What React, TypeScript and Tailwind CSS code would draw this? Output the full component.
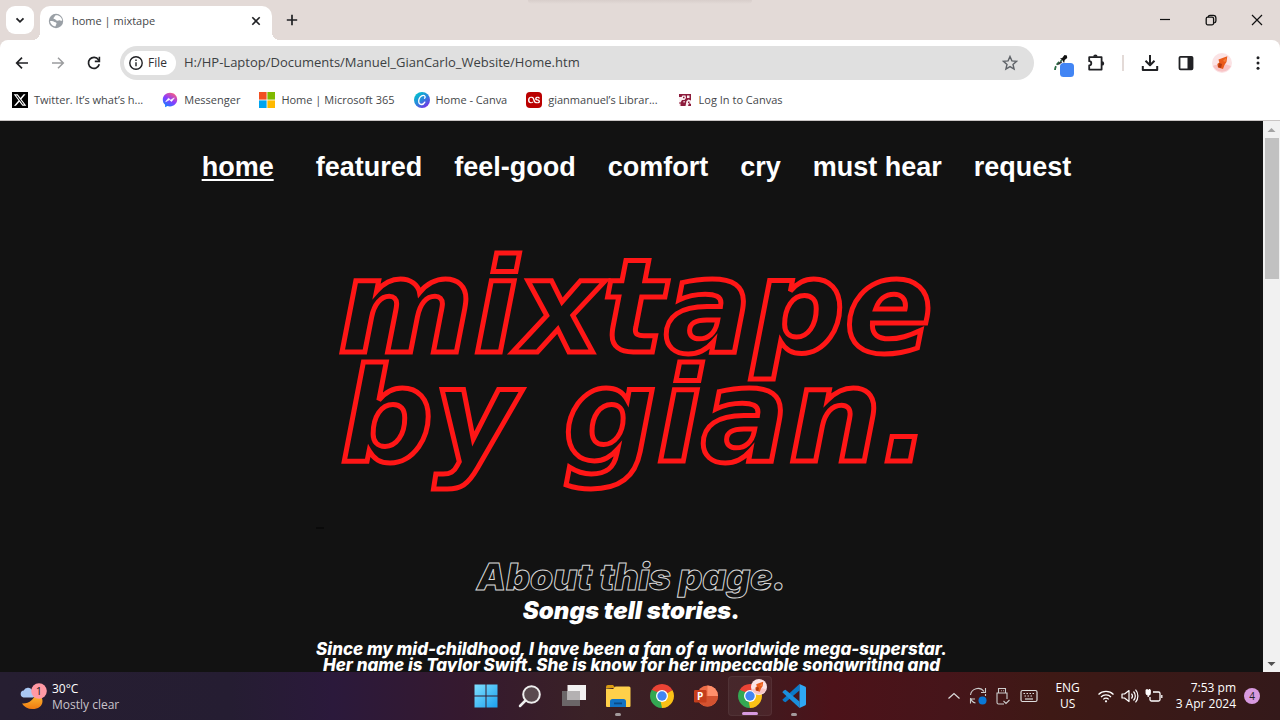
import type { ReactNode } from "react";
import { FaXTwitter, FaLastfm } from "react-icons/fa6";

const bookmarks: { label: string; icon: ReactNode }[] = [
  {
    label: "Twitter. It’s what’s h...",
    icon: (
      <span className="flex size-4 items-center justify-center bg-black text-white">
        <FaXTwitter className="size-3.5" />
      </span>
    ),
  },
  { label: "Messenger", icon: <MessengerIcon /> },
  { label: "Home | Microsoft 365", icon: <MicrosoftIcon /> },
  { label: "Home - Canva", icon: <CanvaIcon /> },
  {
    label: "gianmanuel’s Librar...",
    icon: (
      <span className="flex size-4 items-center justify-center rounded-sm bg-[#ba0000] text-white">
        <FaLastfm className="size-3" />
      </span>
    ),
  },
  { label: "Log In to Canvas", icon: <CanvasIcon /> },
];

const pages = ["featured", "feel-good", "comfort", "cry", "must hear", "request"];

function MessengerIcon() {
  return (
    <svg viewBox="0 0 16 16" className="size-4">
      <defs>
        <linearGradient id="msg" x1="0.2" y1="1" x2="0.8" y2="0">
          <stop offset="0" stopColor="#0a84ff" />
          <stop offset="0.5" stopColor="#8a3cff" />
          <stop offset="1" stopColor="#ff5f7a" />
        </linearGradient>
      </defs>
      <path d="M8 .8C3.900.8.8 3.800.8 7.700c0 2.100.9 3.900 2.300 5.100v2.400l2.300-1.200c.8.2 1.700.4 2.600.4 4.100 0 7.200-2.900 7.200-6.800S12.100.8 8 .8z" fill="url(#msg)" />
      <path d="M3.700 9.700l2.700-3.500 2.200 1.700 3.700-2-2.700 3.600-2.200-1.700z" fill="#fff" stroke="#fff" strokeWidth=".6" strokeLinejoin="round" />
    </svg>
  );
}

function MicrosoftIcon() {
  return (
    <svg viewBox="0 0 16 16" className="size-4">
      <path d="M0 0h7.600v7.600H0z" fill="#f25022" />
      <path d="M8.400 0H16v7.600H8.400z" fill="#7fba00" />
      <path d="M0 8.400h7.600V16H0z" fill="#00a4ef" />
      <path d="M8.400 8.400H16V16H8.400z" fill="#ffb900" />
    </svg>
  );
}

function CanvaIcon() {
  return (
    <svg viewBox="0 0 16 16" className="size-4">
      <defs>
        <linearGradient id="canva" x1="0.1" y1="0.1" x2="0.8" y2="1">
          <stop offset="0" stopColor="#00c4cc" />
          <stop offset="0.5" stopColor="#2b83dc" />
          <stop offset="1" stopColor="#7d2ae8" />
        </linearGradient>
      </defs>
      <circle cx="8" cy="8" r="8" fill="url(#canva)" />
      <path d="M10.500 6.200c1-.6.900-2.900-1.100-2.900-2.500 0-4.700 3-4.700 5.800 0 2.100 1 3.400 2.700 3.400 1.500 0 2.700-1 3.400-2.400" fill="none" stroke="#fff" strokeWidth="1.300" strokeLinecap="round" />
    </svg>
  );
}

function CanvasIcon() {
  return (
    <svg viewBox="0 0 16 16" className="size-4">
      <path d="M2 2h12v12H2z" fill="#8c1c3c" />
      <path d="M2 5h2.500l1-1.500h3L9 6 7.500 8H5l-1.500 2.500H2zM10 3.500h2.500V6H10zM9.500 9l2-1.500L14 8.500V12l-2-1-1 3H8.500z" fill="#fbeff2" />
      <path d="M6 4.800h1.500v1.500H6zM4.500 11h2v1.500h-2zM11 9.500h1.500V11H11z" fill="#8c1c3c" />
      <path d="M2 11.500h1.500V14H2zM6.500 9h1.200v1.500H6.500z" fill="#fbeff2" />
    </svg>
  );
}

function GlobeIcon() {
  return (
    <svg viewBox="0 0 16 16" className="size-4 shrink-0">
      <circle cx="8" cy="8" r="7.200" fill="#9aa0a6" />
      <path d="M7.800 2.200c-1.300.5-.9 1.700-1.900 2.200-.8.4-.4 1.500.5 1.500 1.500 0 1.100 1.400 2.300 1.700 1.300.3 2.500-.7 3.600-.1.700.4 1.400.4 1.900.2-.1-2.900-2.700-5.800-6.400-5.500zM2 7.900c.6 2.900 1.800 4.300 4.300 5.400.8.300 1.600.1 1.500-.8-.1-.9.900-1.200.7-2.200-.3-1.400-2-.9-2.800-1.700C4.900 7.800 3.300 8.100 2 7.900z" fill="#fff" />
    </svg>
  );
}

function ChromeIcon({ className }: { className: string }) {
  return (
    <svg viewBox="0 0 24 24" className={className}>
      <path d="M12 12 1.610 6A12 12 0 0 1 22.390 6z" fill="#ea4335" />
      <path d="M12 12 22.390 6A12 12 0 0 1 12 24z" fill="#fbc116" />
      <path d="M12 12v12A12 12 0 0 1 1.610 6z" fill="#34a853" />
      <path d="M12 6h10.390L12 12z" fill="#ea4335" />
      <path d="M17.200 15 12 24 10 14z" fill="#fbc116" />
      <path d="M6.800 15 1.610 6 10 9z" fill="#34a853" />
      <circle cx="12" cy="12" r="6" fill="#fff" />
      <circle cx="12" cy="12" r="4.700" fill="#4285f4" />
    </svg>
  );
}

function Avatar({ className }: { className: string }) {
  return (
    <svg viewBox="0 0 20 20" className={className}>
      <circle cx="10" cy="10" r="10" fill="#fbe3e5" />
      <path d="M1 13c3-2 5 0 9-1s6 0 9 1a10 10 0 0 1-18 0z" fill="#f8c3c5" />
      <path d="M6.500 6.500 10.500 5l4.800-1.700-.8 5.700-2 3-1.500 4-5-1.500-.7-3.500 2-1.500z" fill="#ea5b1c" />
      <path d="m7 10 3 1-1 4-3-1z" fill="#b23a10" />
      <path d="m11 8 3-3-.5 4z" fill="#f58238" />
    </svg>
  );
}

function IconButton({ label, children }: { label: string; children: ReactNode }) {
  return (
    <button aria-label={label} className="flex h-9 w-9 shrink-0 items-center justify-center">
      {children}
    </button>
  );
}

function TabStrip() {
  return (
    <header className="relative flex h-10 shrink-0 items-end bg-[#e3dad7]">
      <div className="absolute inset-x-0 top-0 mx-auto h-1 w-56 rounded-b bg-linear-to-b from-[#d8cecb] to-[#e3dad7]" />
      <button aria-label="Search tabs" className="mb-1.5 ml-1.5 flex size-7 items-center justify-center rounded-[9px] bg-white">
        <svg viewBox="0 0 16 16" className="size-4">
          <path d="m4.500 6.300 3.500 3.500 3.500-3.500" fill="none" stroke="#202124" strokeWidth="1.800" />
        </svg>
      </button>
      <div className="relative ml-1.5 flex h-[34px] w-[232px] items-center rounded-t-[10px] bg-white pr-2 pb-1 pl-2">
        <span className="absolute bottom-0 -left-2 size-2 bg-[radial-gradient(circle_at_0_0,transparent_8px,white_8px)]" />
        <span className="absolute -right-2 bottom-0 size-2 bg-[radial-gradient(circle_at_100%_0,transparent_8px,white_8px)]" />
        <GlobeIcon />
        <span className="ml-2 flex-1 text-[11px] text-[#45474a]">home | mixtape</span>
        <button aria-label="Close tab" className="flex size-4 items-center justify-center">
          <svg viewBox="0 0 16 16" className="size-4">
            <path d="m4.300 4.300 7.400 7.400m0-7.400-7.400 7.400" stroke="#202124" strokeWidth="1.600" />
          </svg>
        </button>
      </div>
      <button aria-label="New tab" className="mb-1.5 ml-1.5 flex size-7 items-center justify-center">
        <svg viewBox="0 0 16 16" className="size-4">
          <path d="M8 2.800v10.400M2.800 8h10.400" stroke="#202124" strokeWidth="1.700" />
        </svg>
      </button>
      <div className="ml-auto flex h-full">
        <button aria-label="Minimize" className="flex w-[46px] items-center justify-center">
          <svg viewBox="0 0 12 12" className="size-3">
            <path d="M1 5.500h10" stroke="#111" strokeWidth="1.200" />
          </svg>
        </button>
        <button aria-label="Restore" className="flex w-[46px] items-center justify-center">
          <svg viewBox="0 0 12 12" className="size-3" fill="none" stroke="#111" strokeWidth="1.300">
            <rect x="1.200" y="3.200" width="7.400" height="7.600" rx="1.500" />
            <path d="M3.200 3c.2-1 .9-1.600 1.800-1.600h3.200c1.600 0 2.700 1.100 2.700 2.700v3c0 .9-.7 1.700-1.800 1.800" />
          </svg>
        </button>
        <button aria-label="Close" className="flex w-[46px] items-center justify-center">
          <svg viewBox="0 0 12 12" className="size-3">
            <path d="m1 1 10 10M11 1 1 11" stroke="#111" strokeWidth="1.200" />
          </svg>
        </button>
      </div>
    </header>
  );
}

function Toolbar() {
  return (
    <div className="flex h-[46px] items-center px-1">
      <IconButton label="Back">
        <svg viewBox="0 0 16 16" className="size-4">
          <path d="M14 8H3M8 2.700 2.700 8 8 13.300" fill="none" stroke="#202124" strokeWidth="1.700" />
        </svg>
      </IconButton>
      <IconButton label="Forward">
        <svg viewBox="0 0 16 16" className="size-4">
          <path d="M2 8h11M8 2.700 13.300 8 8 13.300" fill="none" stroke="#9b9c9e" strokeWidth="1.500" />
        </svg>
      </IconButton>
      <IconButton label="Reload">
        <svg viewBox="0 0 16 16" className="size-4">
          <path d="M13.300 9.300A5.500 5.500 0 1 1 12.500 4.700L13.300 6" fill="none" stroke="#202124" strokeWidth="1.700" />
          <path d="M12.600 1.800h1.600v5.400H8.800V5.600h3.800z" fill="#202124" />
        </svg>
      </IconButton>
      <div className="mx-2 flex h-[34px] flex-1 items-center rounded-full bg-[#e0e0e0] pr-1.5 pl-1">
        <button className="flex h-6 w-[52px] items-center gap-1 rounded-full bg-white pl-1 text-xs font-medium text-[#303134]">
          <svg viewBox="0 0 16 16" className="size-4" fill="none" stroke="#202124" strokeWidth="1.400">
            <circle cx="8" cy="8" r="6.200" />
            <path d="M8 7.200v4M8 4.600v1.500" />
          </svg>
          File
        </button>
        <input
          aria-label="Address"
          defaultValue="H:/HP-Laptop/Documents/Manuel_GianCarlo_Website/Home.htm"
          className="ml-2 min-w-0 flex-1 bg-transparent text-[13px] text-[#3c4043] outline-none"
        />
        <IconButton label="Bookmark this page">
          <svg viewBox="0 0 16 16" className="size-4">
            <path d="m8 1.500 1.900 4.400 4.700.4-3.600 3.100 1.100 4.700L8 11.600l-4.100 2.500L5 9.400 1.400 6.300l4.700-.4z" fill="none" stroke="#5f6368" strokeWidth="1.400" />
          </svg>
        </IconButton>
      </div>
      <div className="flex items-center">
        <IconButton label="Color picker">
          <svg viewBox="0 0 28 28" className="size-7">
            <path d="M9 21c.3-4.500 2.800-7.500 7-9.800" fill="none" stroke="#2b6b45" strokeWidth="1.800" strokeDasharray="4 1.500" />
            <path d="m11 16 3.500-4 1.800 1.300-3 2.200z" fill="#333" />
            <path d="m14 9.500 2.200-.6L18.500 6l2.400.4.300 2.600-2.500 2-.6 3.200-1.500-2.600z" fill="#111" />
            <rect x="14" y="14" width="14" height="14" rx="3.500" fill="#4285f4" />
          </svg>
        </IconButton>
        <IconButton label="Extensions">
          <svg viewBox="0 0 20 20" className="size-5">
            <path d="M3.200 4.200h12.400v12.400H3.200v-4.100c2.800-.2 2.800-4.100 0-4.300z" fill="none" stroke="#202124" strokeWidth="1.800" strokeLinejoin="round" />
            <path d="M7.200 3.800a2.200 2.200 0 0 1 4.400 0zM16 8.200a2.200 2.200 0 0 1 0 4.400z" fill="#202124" />
          </svg>
        </IconButton>
        <span className="mx-2 h-4 w-0.5 bg-[#e3dad7]" />
        <IconButton label="Downloads">
          <svg viewBox="0 0 20 20" className="size-5">
            <path d="M10 2v10M5.500 7.800l4.500 4.500 4.500-4.500M2.800 13v4h14.400v-4" fill="none" stroke="#202124" strokeWidth="2" strokeLinejoin="round" />
          </svg>
        </IconButton>
        <IconButton label="Side panel">
          <svg viewBox="0 0 16 16" className="size-4">
            <rect x="1.500" y="1.800" width="13" height="12.500" rx="1" fill="none" stroke="#202124" strokeWidth="1.800" />
            <path d="M9.500 2H14v12H9.500z" fill="#202124" />
          </svg>
        </IconButton>
        <IconButton label="Profile">
          <Avatar className="size-5" />
        </IconButton>
        <IconButton label="Menu">
          <svg viewBox="0 0 16 16" className="size-4" fill="#202124">
            <circle cx="8" cy="2.700" r="1.500" />
            <circle cx="8" cy="8" r="1.500" />
            <circle cx="8" cy="13.300" r="1.500" />
          </svg>
        </IconButton>
      </div>
    </div>
  );
}

function BookmarksBar() {
  return (
    <nav aria-label="Bookmarks" className="flex h-[35px] items-center gap-[19px] border-b border-[#c9c5c4] px-3 pb-1.5">
      {bookmarks.map((b) => (
        <a key={b.label} href="#" className="flex items-center gap-1.5 text-[11px] whitespace-nowrap text-[#45474a]">
          {b.icon}
          {b.label}
        </a>
      ))}
    </nav>
  );
}

function Page() {
  return (
    <main className="min-w-0 flex-1 overflow-hidden bg-[#121212] text-white">
      <nav className="flex justify-center gap-8 pt-7 pl-2.5 font-['Liberation_Sans',Arial,sans-serif] text-[27px] leading-9 font-bold whitespace-nowrap">
        <a href="#home" className="mr-2.5 underline decoration-2 underline-offset-3">
          home
        </a>
        {pages.map((p) => (
          <a key={p} href={`#${p}`}>
            {p}
          </a>
        ))}
      </nav>
      <div className="mx-auto max-w-[632px] text-center font-['Inter',sans-serif] font-black whitespace-nowrap italic">
        <h1 className="mt-17 pl-2 font-['DejaVu_Sans',sans-serif] text-[130px] leading-[109px] font-bold text-transparent [-webkit-text-stroke:5px_#ff1616]">
          mixtape
          <br />
          by gian.
        </h1>
        <div className="mt-14 h-0.5 w-2 bg-[#0a0a0a]" />
        <h2 className="mt-7 text-[37px] leading-10 text-transparent [-webkit-text-stroke:1px_#d8d8d8]">About this page.</h2>
        <h3 className="text-2xl leading-7">Songs tell stories.</h3>
        <p className="mt-4 text-[17px] leading-4 font-extrabold">
          Since my mid-childhood, I have been a fan of a worldwide mega-superstar.
          <br />
          Her name is Taylor Swift. She is know for her impeccable songwriting and
        </p>
      </div>
    </main>
  );
}

function Scrollbar() {
  return (
    <div className="flex w-[17px] shrink-0 flex-col items-center bg-[#f1f1f1]">
      <svg viewBox="0 0 17 17" className="size-[17px] shrink-0">
        <path d="M4.500 11 8.500 7l4 4z" fill="#a3a3a3" />
      </svg>
      <div className="h-[141px] w-3.5 bg-[#c1c1c1]" />
      <svg viewBox="0 0 17 17" className="mt-auto size-[17px] shrink-0">
        <path d="m4.500 7 4 4 4-4z" fill="#505050" />
      </svg>
    </div>
  );
}

function AppButton({ label, children, state }: { label: string; children: ReactNode; state?: "open" | "active" }) {
  return (
    <button
      aria-label={label}
      className={
        state === "active"
          ? "relative flex h-10 w-11 items-center justify-center rounded border border-white/5 bg-white/5"
          : "relative flex h-10 w-11 items-center justify-center"
      }
    >
      {children}
      {state === "open" && <span className="absolute bottom-0 h-[3px] w-1.5 rounded-full bg-[#a39a9c]" />}
      {state === "active" && <span className="absolute bottom-0 h-[3px] w-4 rounded-full bg-[#d89ae0]" />}
    </button>
  );
}

function Taskbar() {
  return (
    <footer className="grid h-12 shrink-0 grid-cols-[1fr_auto_1fr] items-center bg-[linear-gradient(90deg,#261e31_0%,#251d32_18%,#2b193b_26%,#35192f_36%,#3a2126_46%,#3e1c20_58%,#4c1219_65%,#46151a_74%,#3e1915_82%,#34191a_100%)] text-xs text-white">
      <button className="flex items-center gap-1 pt-0.5 pl-5 text-left leading-4">
        <svg viewBox="0 -2 28 28" className="size-7">
          <defs>
            <linearGradient id="moon" x1="0" y1="0" x2="0" y2="1">
              <stop offset="0" stopColor="#ffc53a" />
              <stop offset="1" stopColor="#f07a10" />
            </linearGradient>
          </defs>
          <path d="M2 18.500C9 19 15 14 15.500 7.500c4 1 7 4.500 7 8.500 0 5.500-4.500 8-10 8-4.800 0-8.500-2-10.500-5.500z" fill="url(#moon)" />
          <path d="M3.500 12.500a3.500 3.500 0 0 1 .2-6.900 4.600 4.600 0 0 1 8.800 1.100 3 3 0 0 1 .5 5.800z" fill="#a9c8f5" />
          <circle cx="19" cy="6" r="7.800" fill="#ff99a4" />
          <text x="19" y="10" textAnchor="middle" fontSize="11" fill="#222">1</text>
        </svg>
        <span className="flex flex-col">
          <span>30°C</span>
          <span className="text-[#c9c3ca]">Mostly clear</span>
        </span>
      </button>
      <div className="flex items-center">
        <AppButton label="Start">
          <svg viewBox="0 0 24 24" className="size-6">
            <defs>
              <linearGradient id="win" x1="0" y1="0" x2="1" y2="1">
                <stop offset="0" stopColor="#7fe0ff" />
                <stop offset="1" stopColor="#1b9fee" />
              </linearGradient>
            </defs>
            <path d="M.5.5h11v11H.5zM12.500.5h11v11h-11zM.5 12.500h11v11H.5zM12.500 12.500h11v11h-11z" fill="url(#win)" />
          </svg>
        </AppButton>
        <AppButton label="Search">
          <svg viewBox="0 0 24 24" className="size-6">
            <circle cx="13.500" cy="10.500" r="8.300" fill="#5a4a4f" stroke="#eee" strokeWidth="2" />
            <path d="M7.500 16.500 2 22" stroke="#eee" strokeWidth="2.500" strokeLinecap="round" />
          </svg>
        </AppButton>
        <AppButton label="Task view">
          <svg viewBox="0 0 24 24" className="size-6">
            <path d="M0 7h18v15H0z" fill="#6b6668" />
            <path d="M5.500 1H24v15H5.500z" fill="#f2f1f1" />
            <path d="M5.500 7H18v9H5.500z" fill="#b4b1b2" />
          </svg>
        </AppButton>
        <AppButton label="File Explorer" state="open">
          <svg viewBox="0 0 26 24" className="h-6 w-[26px]">
            <path d="M1 3a2 2 0 0 1 2-2h5l2.500 3H1z" fill="#d99a12" />
            <path d="M1 4.500 8 5l2.500-2.500H24a1.500 1.500 0 0 1 1.500 1.500v18a1 1 0 0 1-1 1H2a1 1 0 0 1-1-1z" fill="#ffd04a" />
            <path d="M5 23v-5.500A2.500 2.500 0 0 1 7.500 15h11a2.500 2.500 0 0 1 2.500 2.500V23z" fill="#1273c4" />
            <path d="M9 18.500h8v1.800H9z" fill="#0b4a86" />
          </svg>
        </AppButton>
        <AppButton label="Google Chrome">
          <ChromeIcon className="size-6" />
        </AppButton>
        <AppButton label="PowerPoint">
          <svg viewBox="0 0 24 24" className="size-6">
            <circle cx="13.500" cy="12" r="10.500" fill="#ed6c47" />
            <path d="M13.500 1.500A10.500 10.500 0 0 1 24 12H13.500z" fill="#ff8f6b" />
            <path d="M3 12h21a10.500 10.500 0 0 1-21 0z" fill="#d35230" />
            <rect x="0" y="6" width="12.500" height="12.500" rx="1.200" fill="#c43e1c" />
            <text x="6.200" y="16" textAnchor="middle" fontSize="10" fontWeight="700" fill="#fff">P</text>
          </svg>
        </AppButton>
        <AppButton label="Google Chrome - Profile" state="active">
          <ChromeIcon className="size-6" />
          <Avatar className="absolute top-0.5 right-1 size-4" />
        </AppButton>
        <AppButton label="Visual Studio Code" state="open">
          <svg viewBox="0 0 24 24" className="size-6">
            <path d="M17.500 0v6.500L3.500 18.200 1.800 17.500.3 15.800z" fill="#0b79c8" />
            <path d="M17.500 24v-6.500L3.500 5.800 1.800 6.500.3 8.200z" fill="#1b8fdd" />
            <path d="M17.500 0 23 2.500a1.500 1.500 0 0 1 1 1.400v16.200a1.500 1.500 0 0 1-1 1.400L17.500 24z" fill="#2fa8f5" />
          </svg>
        </AppButton>
      </div>
      <div className="flex items-center justify-end pr-5">
        <button aria-label="Show hidden icons" className="flex w-6 justify-center">
          <svg viewBox="0 0 16 16" className="size-4">
            <path d="m2.500 10.500 5.500-5 5.500 5" fill="none" stroke="#ddd" strokeWidth="1.200" />
          </svg>
        </button>
        <button aria-label="Sync" className="flex w-6 justify-center">
          <svg viewBox="0 0 18 18" className="size-[18px]">
            <path d="M1.500 8A7.500 7.500 0 0 1 15 4.500M16.500 1v4.500H12M1.500 11a7 7 0 0 0 5 5M1.500 16.500V12H6M16.500 7v2" fill="none" stroke="#ccc" strokeWidth="1.100" />
            <circle cx="13.500" cy="13.500" r="4" fill="#0a78d7" />
          </svg>
        </button>
        <button aria-label="Safely remove hardware" className="flex w-6 justify-center">
          <svg viewBox="0 0 16 18" className="h-[18px] w-4" fill="none" stroke="#ccc" strokeWidth="1.100">
            <path d="M4.500 6V1.500h7V6M10 17H4.500A1.500 1.500 0 0 1 3 15.500V6h10v6M9.500 14l2.500 2.500 3.500-3.500M7 3.800h.8M9 3.800h.8" />
          </svg>
        </button>
        <button aria-label="Touch keyboard" className="flex w-[30px] justify-center">
          <svg viewBox="0 0 18 14" className="h-3.5 w-[18px]" fill="none" stroke="#ddd" strokeWidth="1.200">
            <rect x="1" y="1.500" width="16" height="11" rx="1.500" />
            <path d="M3.500 4.500h11M4.500 7h9" strokeDasharray="1.500 1.500" />
            <path d="M5 10h8" />
          </svg>
        </button>
        <button className="w-12 text-center leading-4">
          ENG
          <br />
          US
        </button>
        <button aria-label="Network, volume and battery" className="flex w-[76px] items-center justify-center gap-1.5">
          <svg viewBox="0 0 18 16" className="h-4 w-[18px]" fill="none" stroke="#fff" strokeWidth="1.200">
            <path d="M1.500 6.500a10.500 10.500 0 0 1 15 0M4 9a7 7 0 0 1 10 0M6.300 11.300a3.800 3.800 0 0 1 5.400 0" />
            <circle cx="9" cy="13.300" r="1.100" fill="#fff" stroke="none" />
          </svg>
          <svg viewBox="0 0 18 16" className="h-4 w-[18px]" fill="none" stroke="#fff" strokeWidth="1.200" strokeLinejoin="round">
            <path d="M1 6v4h2.500L8 13.500v-11L3.500 6zM10.500 5.500a4 4 0 0 1 0 5M12.500 3.500a6.500 6.500 0 0 1 0 9M14.500 1.700a9.500 9.500 0 0 1 0 12.600" />
          </svg>
          <svg viewBox="0 0 18 16" className="h-4 w-[18px]" fill="none" stroke="#fff" strokeWidth="1.300">
            <path d="M8 4h5.500A1.500 1.500 0 0 1 15 5.500v6a1.500 1.500 0 0 1-1.500 1.500h-7A1.500 1.500 0 0 1 5 11.500V9M16.800 7v3" />
            <path d="M1.200 2.500h4V5a2 2 0 0 1-4 0zM2 2.500V1M4.500 2.500V1M3.200 7v2" fill="#fff" />
          </svg>
        </button>
        <button className="flex items-center gap-2 pl-2 text-right leading-4 whitespace-nowrap">
          <span>
            7:53 pm
            <br />3 Apr 2024
          </span>
          <span className="flex size-4 items-center justify-center rounded-full bg-[#d89ae0] text-[10px] text-[#222]">4</span>
        </button>
      </div>
    </footer>
  );
}

export default function App() {
  return (
    <div className="flex h-screen flex-col overflow-hidden bg-[#121212] font-['Open_Sans','Noto_Sans',sans-serif]">
      <TabStrip />
      <div className="bg-[#e3dad7]">
        <div className="rounded-t-lg bg-white">
          <Toolbar />
          <BookmarksBar />
        </div>
      </div>
      <div className="flex min-h-0 flex-1">
        <Page />
        <Scrollbar />
      </div>
      <Taskbar />
    </div>
  );
}
